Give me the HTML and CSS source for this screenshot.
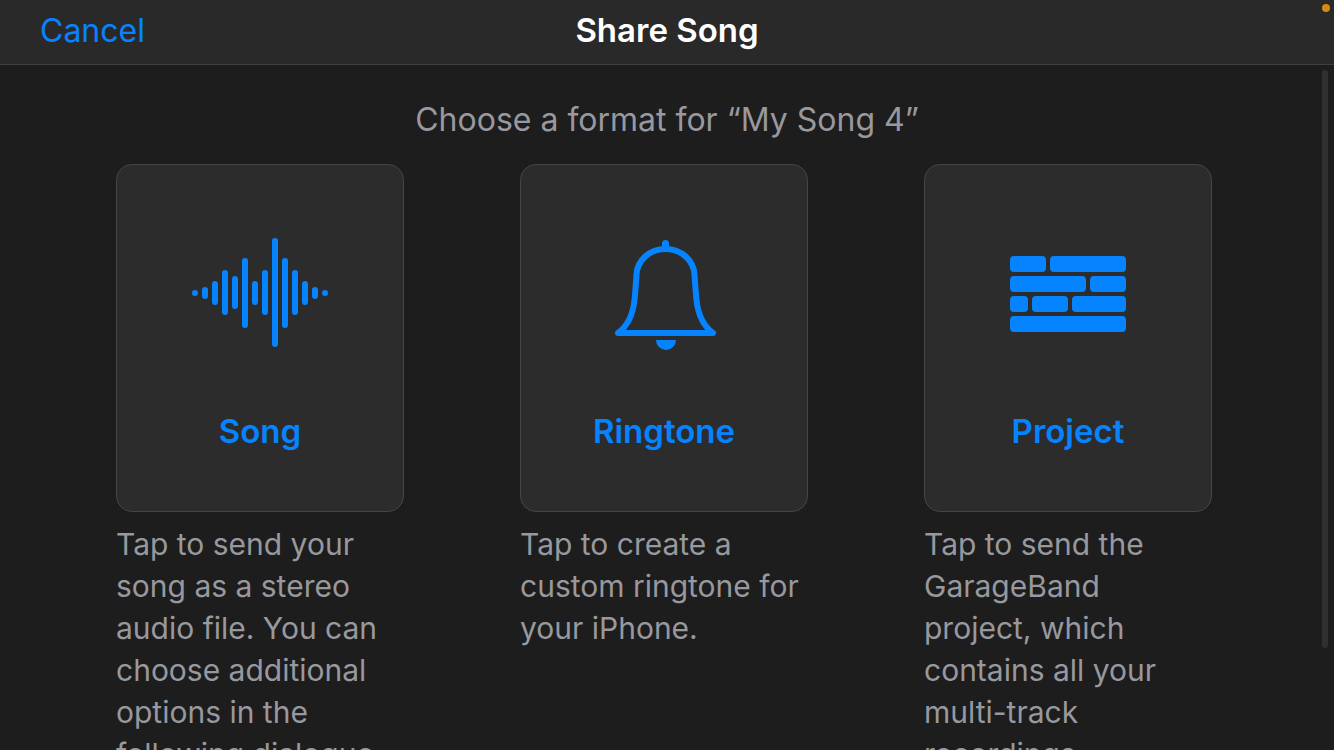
FILE: index.html
```html
<!DOCTYPE html>
<html lang="en">
<head>
    <meta charset="UTF-8">
    <meta name="viewport" content="width=device-width, initial-scale=1.0">
    <title>Share Song</title>
    <link rel="stylesheet" href="styles.css">
</head>
<body>
    <header class="navbar">
        <button class="cancel" type="button">Cancel</button>
        <h1 class="title">Share Song</h1>
        <span class="mic-dot"></span>
    </header>

    <main class="content">
        <h2 class="prompt">Choose a format for “My Song 4”</h2>

        <div class="formats">
            <section class="format">
                <button class="card" type="button" aria-describedby="song-text">
                    <svg class="icon" viewBox="0 0 136 114" aria-hidden="true">
                        <path d="M3 56v.01M13 53v6M23 47v18M33 36v39M43 42v27M53 24v64M63 47v18M73 36v39M83 4v103M93 24v64M103 36v39M113 47v18M123 53v6M133 56v.01" fill="none" stroke="currentColor" stroke-width="6" stroke-linecap="round"/>
                    </svg>
                    <span class="label">Song</span>
                </button>
                <p class="description" id="song-text">Tap to send your song as a stereo audio file. You can choose additional options in the following dialogue.</p>
            </section>

            <section class="format">
                <button class="card" type="button" aria-describedby="ringtone-text">
                    <svg class="icon" viewBox="0 0 136 114" aria-hidden="true">
                        <g transform="translate(19 3)">
                            <path d="M50.5 3.5V8" fill="none" stroke="currentColor" stroke-width="7" stroke-linecap="round"/>
                            <path d="M3 93C14 85 18 74 19.500 60C20.500 50 21 42 21.500 35C22 20 35 9 50.500 9C66 9 79 20 79.500 35C80 42 80.500 50 81.500 60C83 74 87 85 98 93Z" fill="none" stroke="currentColor" stroke-width="6" stroke-linejoin="round"/>
                            <path d="M41 100H61A10 10 0 0 1 41 100Z" fill="currentColor"/>
                        </g>
                    </svg>
                    <span class="label">Ringtone</span>
                </button>
                <p class="description" id="ringtone-text">Tap to create a custom ringtone for your iPhone.</p>
            </section>

            <section class="format">
                <button class="card" type="button" aria-describedby="project-text">
                    <svg class="icon" viewBox="0 0 136 114" aria-hidden="true">
                        <g fill="currentColor" transform="translate(10 19)">
                            <rect x="0" y="0" width="36" height="16" rx="4"/>
                            <rect x="40" y="0" width="76" height="16" rx="4"/>
                            <rect x="0" y="20" width="76" height="16" rx="4"/>
                            <rect x="80" y="20" width="36" height="16" rx="4"/>
                            <rect x="0" y="40" width="18" height="16" rx="4"/>
                            <rect x="22" y="40" width="36" height="16" rx="4"/>
                            <rect x="62" y="40" width="54" height="16" rx="4"/>
                            <rect x="0" y="60" width="116" height="16" rx="4"/>
                        </g>
                    </svg>
                    <span class="label">Project</span>
                </button>
                <p class="description" id="project-text">Tap to send the GarageBand project, which contains all your multi-track recordings.</p>
            </section>
        </div>
    </main>
    <div class="scroll-thumb"></div>
</body>
</html>
```
FILE: styles.css
```css
* {
    box-sizing: border-box;
}

body {
    margin: 0;
    height: 100vh;
    display: flex;
    flex-direction: column;
    overflow: hidden;
    background-color: #1d1d1d;
    color: #98989f;
    font-family: Inter, "Liberation Sans", sans-serif;
}

button {
    font-family: inherit;
    border: none;
    cursor: pointer;
    color: #0684ff;
}

.navbar {
    position: relative;
    flex: none;
    display: grid;
    grid-template-columns: 1fr auto 1fr;
    align-items: baseline;
    padding: 8px 40px 12px;
    background-color: #292929;
    border-bottom: 1px solid #414141;
}

.cancel {
    justify-self: start;
    padding: 0;
    background: none;
    font-size: 32px;
    line-height: 42px;
}

.title {
    margin: 0;
    color: #fff;
    font-size: 33px;
    font-weight: 600;
    line-height: 44px;
}

/* microphone-in-use light */
.mic-dot {
    position: absolute;
    top: 4px;
    right: 4px;
    width: 8px;
    height: 8px;
    border-radius: 50%;
    background-color: #d58a13;
}

.content {
    flex: 1;
    min-height: 0;
    padding: 33px 116px;
    overflow-y: auto;
    scrollbar-width: none;
}

.prompt {
    margin: 0 0 22px;
    text-align: center;
    font-size: 32px;
    font-weight: 400;
    line-height: 44px;
}

.formats {
    display: grid;
    grid-template-columns: repeat(3, 288px);
    justify-content: space-between;
    padding-right: 6px;
}

.card {
    width: 100%;
    display: flex;
    flex-direction: column;
    align-items: center;
    gap: 58px;
    padding: 72px 16px 58px;
    background-color: #2c2c2c;
    border: 1px solid #464648;
    border-radius: 16px;
}

.card:active {
    background-color: #3a3a3a;
}

.icon {
    width: 136px;
    height: 114px;
}

.label {
    font-size: 33px;
    font-weight: 600;
    line-height: 44px;
}

.description {
    margin: 11px 0 0;
    font-size: 30px;
    line-height: 42px;
}

.scroll-thumb {
    position: absolute;
    top: 70px;
    right: 6px;
    width: 6px;
    height: 77%;
    border-radius: 3px;
    background-color: #303030;
}
```
